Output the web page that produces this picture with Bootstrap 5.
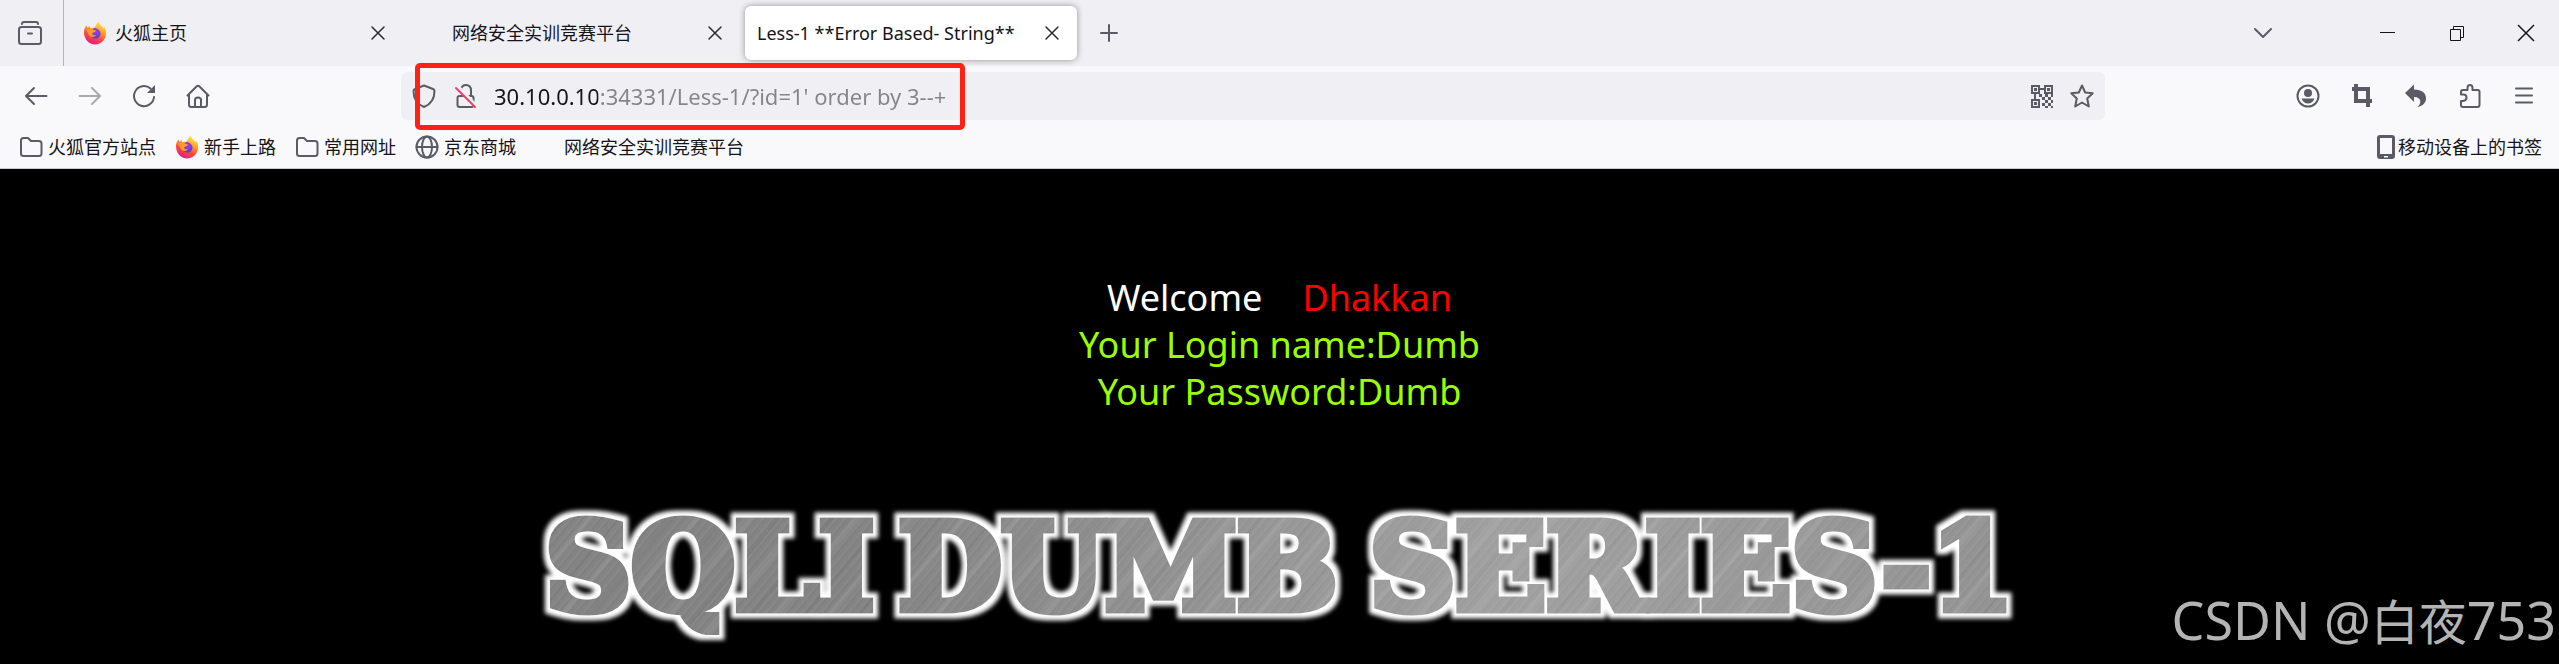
<!DOCTYPE html>
<html lang="zh-CN">
<head>
<meta charset="utf-8">
<meta name="viewport" content="width=device-width, initial-scale=1">
<title>Less-1 **Error Based- String**</title>
<link href="https://cdn.jsdelivr.net/npm/bootstrap@5.3.0/dist/css/bootstrap.min.css" rel="stylesheet">
<style>
  :root { --strip:#f0eff4; --bar:#f9f9fb; --ink:#15141a; --icon:#5b5b66; }
  body { font-family:"Noto Sans","Noto Sans CJK SC",sans-serif; font-size:18px; line-height:24px; color:var(--ink); background:#000; }
  .ico { width:24px; height:24px; flex:none; fill:none; stroke:var(--icon); stroke-width:2; stroke-linecap:round; stroke-linejoin:round; display:block; }
  .ico .solid { fill:var(--icon); stroke:none; }
  .plain { border:0; background:none; padding:0; display:flex; align-items:center; justify-content:center; color:inherit; }
  .strip { background:var(--strip); height:66px; }
  .side-toggle { width:64px; border-right:1px solid #b5b4bb; padding-right:3px; }
  .tabs { gap:5px; padding:6px 0 6px 7px; }
  .page-tab { width:332px; padding:0 13px 0 12px; border-radius:6px; }
  .page-tab.current { background:#fff; box-shadow:0 0 6px rgba(0,0,0,.4); }
  .page-tab a, .marks a { color:inherit; text-decoration:none; white-space:nowrap; }
  .tab-label { gap:8px; }
  .slot { width:24px; flex:none; }
  .win { width:69px; }
  .win .ico { stroke:#15141a; stroke-width:1; stroke-linecap:butt; stroke-linejoin:miter; }
  .tools { background:var(--bar); padding:6px 8px 6px 9px; }
  .tool { width:54px; height:48px; }
  .spring { flex:0 1 176px; }
  .address { background:var(--strip); border-radius:6px; height:48px; padding:0 11px; }
  .address input { border:0; outline:0; padding:0; font-size:22px; height:40px; min-width:0;
    background:linear-gradient(90deg,var(--ink) 104px,#85848a 104px); -webkit-background-clip:text; background-clip:text; color:transparent; }
  .lock { margin:0 16px 0 18px; }
  .callout-box { left:14px; top:-9px; width:550px; height:67px; border:5px solid #ff2114; border-radius:5px; pointer-events:none; }
  .marks { background:var(--bar); padding:9px 17px 9px 19px; border-bottom:1px solid #cccccf; gap:19px; }
  .marks a { display:flex; align-items:center; gap:5px; }
  .marks .device { gap:1px; }
  .marks .device .ico { width:20px; }
  .lesson { padding-top:105px; }
  .greeting { font-size:36px; line-height:47px; color:#9f0; }
  .who { gap:40px; }
  .banner { font-family:"DejaVu Serif",serif; font-weight:700; font-size:119px; line-height:136px; margin:84px 0 0; gap:24px;
    white-space:nowrap; color:transparent; -webkit-text-stroke:9px transparent;
    background:linear-gradient(90deg,transparent 20%,rgba(255,255,255,.24) 65%,rgba(255,255,255,.12)),
      repeating-linear-gradient(130deg,transparent 0 13px,rgba(255,255,255,.08) 17px 19px,transparent 22px 37px,rgba(0,0,0,.06) 41px),
      repeating-linear-gradient(130deg,#828282 0,#898989 3px,#7f7f7f 5px,#868686 7px);
    -webkit-background-clip:text; background-clip:text; padding:0 16px; filter:url(#halo); }
  .watermark { right:3px; bottom:12px; font-size:52px; line-height:64px; color:#b4b4b4; }
  .watermark span { font-size:48px; font-family:"Noto Sans CJK SC",sans-serif; }
</style>
</head>
<body class="min-vh-100 d-flex flex-column position-relative overflow-hidden">
<svg width="0" height="0" class="position-absolute" aria-hidden="true">
  <defs>
    <linearGradient id="flame" x1=".75" y1="0" x2=".3" y2="1"><stop offset="0" stop-color="#fff44f"/><stop offset=".35" stop-color="#ffa62a"/><stop offset=".65" stop-color="#ff4a3d"/><stop offset="1" stop-color="#e31587"/></linearGradient>
    <radialGradient id="core" cx=".5" cy=".3" r=".8"><stop offset="0" stop-color="#a03cf0"/><stop offset="1" stop-color="#4b3fc4"/></radialGradient>
    <filter id="halo" x="-3%" y="-20%" width="106%" height="140%">
      <feMorphology in="SourceAlpha" operator="dilate" radius="5" result="fat"/>
      <feGaussianBlur in="fat" stdDeviation="2" result="soft"/>
      <feFlood flood-color="#fff"/><feComposite in2="soft" operator="in" result="glow"/>
      <feMerge><feMergeNode in="glow"/><feMergeNode in="SourceGraphic"/></feMerge>
    </filter>
    <symbol id="fox" viewBox="0 0 24 24"><g stroke="none">
      <path fill="url(#flame)" d="M1 11C1 8.500 2 6 3.500 4.500L4.500 7 6.500 5 7.500 7.500C9 6.500 11 6.500 12 6.500 12.500 4 14 2 15.500 0.500 16.500 3.500 19 4.500 20 7L21.500 6C23 8.500 23.500 11 23 14 22 19.500 17.500 23.500 12 23.500 6 23.500 1 18.500 1 11Z"/>
      <path fill="url(#core)" d="M8 11.500C8.500 9 10.500 8.500 11 7 14.500 7 17.500 9.500 17.500 12.500 17.500 15.500 15 17.500 12.500 17.500 9.500 17.500 7.500 15 8 12Z"/>
      <path fill="#ff9a2b" d="M3 9C5 7.500 8 7 9.500 8.500L13 9.500C12.500 11 10.500 11.500 9.500 12 8.500 13 10 15 13 14 11 17.500 6 16 5 12Z"/></g></symbol>
    <symbol id="folder" viewBox="0 0 24 24"><path d="M2 5.500Q2 3 4.500 3H9L12 6H20Q22.500 6 22.500 8.500V18.500Q22.500 21 20 21H4.500Q2 21 2 18.500Z"/></symbol>
    <symbol id="cross" viewBox="0 0 24 24"><path stroke="#2b2a33" stroke-width="1.500" d="M6 6 18 18M18 6 6 18"/></symbol>
  </defs>
</svg>

<header>
  <div class="strip d-flex">
    <button class="plain side-toggle" aria-label="标签页"><svg class="ico" viewBox="0 0 24 24"><path d="M4 3Q4 1 6 1H18Q20 1 20 3"/><rect x="1" y="6" width="22" height="17" rx="2.500"/><path d="M10 12.500H14"/></svg></button>
    <nav class="tabs d-flex">
      <div class="page-tab d-flex align-items-center justify-content-between"><a href="#" class="tab-label d-flex align-items-center"><svg class="ico"><use href="#fox"/></svg>火狐主页</a><button class="plain" aria-label="关闭"><svg class="ico"><use href="#cross"/></svg></button></div>
      <div class="page-tab d-flex align-items-center justify-content-between"><a href="#" class="tab-label d-flex align-items-center"><span class="slot"></span>网络安全实训竞赛平台</a><button class="plain" aria-label="关闭"><svg class="ico"><use href="#cross"/></svg></button></div>
      <div class="page-tab current d-flex align-items-center justify-content-between"><a href="#">Less-1 **Error Based- String**</a><button class="plain" aria-label="关闭"><svg class="ico"><use href="#cross"/></svg></button></div>
    </nav>
    <button class="plain tool align-self-center ms-1" aria-label="新标签页"><svg class="ico" viewBox="0 0 24 24"><path d="M13 4V20M5 12H21"/></svg></button>
    <button class="plain tool align-self-center ms-auto me-5" aria-label="列出标签页"><svg class="ico" viewBox="0 0 24 24"><path d="M6 8 14 16 22 8"/></svg></button>
    <div class="d-flex ms-3">
      <button class="plain win" aria-label="最小化"><svg class="ico" viewBox="0 0 24 24"><path d="M5 11.500H20"/></svg></button>
      <button class="plain win" aria-label="还原"><svg class="ico" viewBox="0 0 24 24"><path d="M6.500 8.500H16.500V19.500H6.500ZM9.500 8.500V5.500H19.500V16.500H16.500"/></svg></button>
      <button class="plain win" aria-label="关闭窗口"><svg class="ico" viewBox="0 0 24 24"><path stroke-width="1.500" d="M5 4 21 20M21 4 5 20"/></svg></button>
    </div>
  </div>

  <div class="tools d-flex align-items-center">
    <button class="plain tool" aria-label="后退"><svg class="ico" viewBox="0 0 24 24"><path d="M22.500 12H2M10 4 2 12 10 20"/></svg></button>
    <button class="plain tool opacity-50" aria-label="前进"><svg class="ico" viewBox="0 0 24 24"><path d="M1.500 12H22M14 4 22 12 14 20"/></svg></button>
    <button class="plain tool" aria-label="刷新"><svg class="ico" viewBox="0 0 24 24"><path d="M22 13A10 10 0 1 1 18.500 4.500"/><path class="solid" d="M23 1V9H15Z"/></svg></button>
    <button class="plain tool" aria-label="主页"><svg class="ico" viewBox="0 0 24 24"><path d="M1.500 11.500 10.500 2.500Q12 1 13.500 2.500L22.500 11.500M3 10.500V20.500Q3 23 5.500 23H18.500Q21 23 21 20.500V10.500M9 22.500V16Q9 13.500 12 13.500 15 13.500 15 16V22.500"/></svg></button>
    <div class="spring"></div>
    <div class="address flex-fill d-flex align-items-center position-relative">
      <svg class="ico" viewBox="0 0 24 24"><path d="M12 1.500 21 5Q22.500 5.500 22.500 7C22.500 14 19.500 20 12 23 4.500 20 1.500 14 1.500 7Q1.500 5.500 3 5Z"/></svg>
      <svg class="ico lock" viewBox="0 0 24 24"><rect x="3.500" y="12" width="16" height="11" rx="2"/><path d="M7 5.500Q8 1 12 1 17 1 17 6.500V11"/><path stroke="var(--strip)" stroke-width="4" d="M3 2 23 23"/><path stroke="#ef3f67" d="M2 4 21 23"/></svg>
      <input class="flex-fill" type="text" aria-label="地址" value="30.10.0.10:34331/Less-1/?id=1' order by 3--+" spellcheck="false">
      <button class="plain" aria-label="二维码"><svg class="ico" viewBox="0 0 24 24"><path stroke-linejoin="miter" d="M2 2H9V9H2ZM15 2H22V9H15ZM2 16H9V23H2ZM9 5H15M5 9V16"/><path class="solid" d="M4 4H7V7H4ZM17 4H20V7H17ZM4 18H7V21H4ZM9 10H12V13H9ZM15 10H18V13H15ZM12 13H15V16H12ZM18 13H21V16H18ZM21 10H23V13H21ZM15 16H18V19H15ZM21 16H23V19H21ZM12 19H15V22H12ZM18 19H21V22H18ZM15 22H18V24H15ZM21 22H23V24H21Z"/></svg></button>
      <button class="plain ms-3" aria-label="加入书签"><svg class="ico" viewBox="0 0 24 24"><path d="M12 1.500 15.200 8.500 22.700 9.300 17.200 14.500 18.800 22.500 12 18.500 5.200 22.500 6.800 14.500 1.300 9.300 8.800 8.500Z"/></svg></button>
      <div class="callout-box position-absolute"></div>
    </div>
    <div class="spring"></div>
    <button class="plain tool" aria-label="账户"><svg class="ico" viewBox="0 0 24 24"><circle cx="12" cy="12" r="10.500"/><circle class="solid" cx="12" cy="9" r="4"/><path class="solid" d="M5.500 14.500H18.500Q16.500 19.500 12 19.500 7.500 19.500 5.500 14.500Z"/></svg></button>
    <button class="plain tool" aria-label="截图"><svg class="ico" viewBox="0 0 24 24"><path stroke-width="4" stroke-linecap="butt" stroke-linejoin="miter" d="M6 0V17H22M2 5H18V23"/></svg></button>
    <button class="plain tool" aria-label="撤销"><svg class="ico" viewBox="0 0 24 24"><path class="solid" d="M1 9 10 .5V5.500C18 5.500 22 9 22 14.500 22 19 18 22.500 13.500 23 17.500 20 18 13 10 13V18Z"/></svg></button>
    <button class="plain tool" aria-label="扩展"><svg class="ico" viewBox="0 0 24 24"><path d="M3 9.500V8Q3 6 5 6H9.500V4Q9.500 1 12 1 14.500 1 14.500 4V6H19.500Q21.500 6 21.500 8V21Q21.500 23 19.500 23H5Q3 23 3 21V17H5Q8.500 16.500 8.500 13.500 8.500 10.500 5.500 10.500H3Z"/></svg></button>
    <button class="plain tool" aria-label="菜单"><svg class="ico" viewBox="0 0 24 24"><path d="M4 4.500H20M4 11.500H20M4 18.500H20"/></svg></button>
  </div>

  <nav class="marks d-flex align-items-center">
    <a href="#"><svg class="ico"><use href="#folder"/></svg>火狐官方站点</a>
    <a href="#"><svg class="ico"><use href="#fox"/></svg>新手上路</a>
    <a href="#"><svg class="ico"><use href="#folder"/></svg>常用网址</a>
    <a href="#"><svg class="ico" viewBox="0 0 24 24"><circle cx="12" cy="12" r="10.500"/><ellipse cx="12" cy="12" rx="5" ry="10.500"/><path d="M1.500 12H22.500"/></svg>京东商城</a>
    <a href="#"><span class="slot"></span>网络安全实训竞赛平台</a>
    <a href="#" class="device ms-auto"><svg class="ico" viewBox="0 0 20 24"><path class="solid" fill-rule="evenodd" d="M3 0H15Q18 0 18 3V21Q18 24 15 24H3Q0 24 0 21V3Q0 0 3 0ZM3 3V19H15V3ZM7 21V22.500H11V21Z"/></svg>移动设备上的书签</a>
  </nav>
</header>

<main class="lesson flex-fill d-flex flex-column align-items-center">
  <div class="greeting text-center">
    <div class="who d-flex justify-content-center"><span class="text-white">Welcome</span><span style="color:#f00">Dhakkan</span></div>
    <div>Your Login name:Dumb</div>
    <div>Your Password:Dumb</div>
  </div>
  <h1 class="banner d-flex"><span>SQLI</span> <span class="me-2">DUMB</span> <span>SERIES-1</span></h1>
</main>
<div class="watermark position-absolute">CSDN @<span>白夜</span>753</div>
<script src="https://cdn.jsdelivr.net/npm/bootstrap@5.3.0/dist/js/bootstrap.bundle.min.js"></script>
</body>
</html>
